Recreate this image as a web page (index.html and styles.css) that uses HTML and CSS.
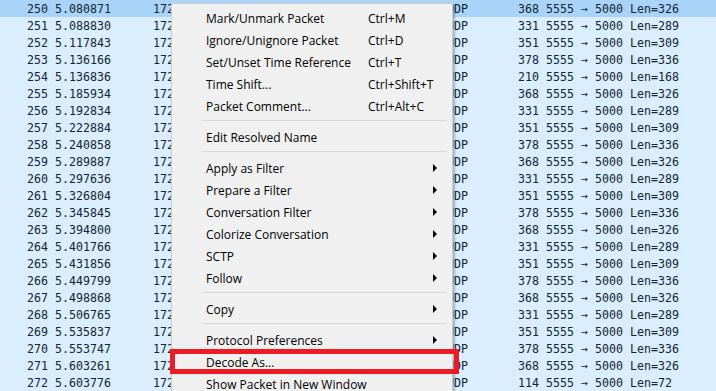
FILE: index.html
```html
<!DOCTYPE html>
<html>
<head>
<meta charset="utf-8">
<link rel="stylesheet" href="styles.css">
</head>
<body>
<div class="packets">
  <div class="row selected"><span class="no">250</span><span class="time">5.080871</span><span class="src">172.16.1.10</span><span class="proto">UDP</span><span class="len">368</span><span class="info">5555 → 5000 Len=326</span></div>
  <div class="row"><span class="no">251</span><span class="time">5.088830</span><span class="src">172.16.1.10</span><span class="proto">UDP</span><span class="len">331</span><span class="info">5555 → 5000 Len=289</span></div>
  <div class="row"><span class="no">252</span><span class="time">5.117843</span><span class="src">172.16.1.10</span><span class="proto">UDP</span><span class="len">351</span><span class="info">5555 → 5000 Len=309</span></div>
  <div class="row"><span class="no">253</span><span class="time">5.136166</span><span class="src">172.16.1.10</span><span class="proto">UDP</span><span class="len">378</span><span class="info">5555 → 5000 Len=336</span></div>
  <div class="row"><span class="no">254</span><span class="time">5.136836</span><span class="src">172.16.1.10</span><span class="proto">UDP</span><span class="len">210</span><span class="info">5555 → 5000 Len=168</span></div>
  <div class="row"><span class="no">255</span><span class="time">5.185934</span><span class="src">172.16.1.10</span><span class="proto">UDP</span><span class="len">368</span><span class="info">5555 → 5000 Len=326</span></div>
  <div class="row"><span class="no">256</span><span class="time">5.192834</span><span class="src">172.16.1.10</span><span class="proto">UDP</span><span class="len">331</span><span class="info">5555 → 5000 Len=289</span></div>
  <div class="row"><span class="no">257</span><span class="time">5.222884</span><span class="src">172.16.1.10</span><span class="proto">UDP</span><span class="len">351</span><span class="info">5555 → 5000 Len=309</span></div>
  <div class="row"><span class="no">258</span><span class="time">5.240858</span><span class="src">172.16.1.10</span><span class="proto">UDP</span><span class="len">378</span><span class="info">5555 → 5000 Len=336</span></div>
  <div class="row"><span class="no">259</span><span class="time">5.289887</span><span class="src">172.16.1.10</span><span class="proto">UDP</span><span class="len">368</span><span class="info">5555 → 5000 Len=326</span></div>
  <div class="row"><span class="no">260</span><span class="time">5.297636</span><span class="src">172.16.1.10</span><span class="proto">UDP</span><span class="len">331</span><span class="info">5555 → 5000 Len=289</span></div>
  <div class="row"><span class="no">261</span><span class="time">5.326804</span><span class="src">172.16.1.10</span><span class="proto">UDP</span><span class="len">351</span><span class="info">5555 → 5000 Len=309</span></div>
  <div class="row"><span class="no">262</span><span class="time">5.345845</span><span class="src">172.16.1.10</span><span class="proto">UDP</span><span class="len">378</span><span class="info">5555 → 5000 Len=336</span></div>
  <div class="row"><span class="no">263</span><span class="time">5.394800</span><span class="src">172.16.1.10</span><span class="proto">UDP</span><span class="len">368</span><span class="info">5555 → 5000 Len=326</span></div>
  <div class="row"><span class="no">264</span><span class="time">5.401766</span><span class="src">172.16.1.10</span><span class="proto">UDP</span><span class="len">331</span><span class="info">5555 → 5000 Len=289</span></div>
  <div class="row"><span class="no">265</span><span class="time">5.431856</span><span class="src">172.16.1.10</span><span class="proto">UDP</span><span class="len">351</span><span class="info">5555 → 5000 Len=309</span></div>
  <div class="row"><span class="no">266</span><span class="time">5.449799</span><span class="src">172.16.1.10</span><span class="proto">UDP</span><span class="len">378</span><span class="info">5555 → 5000 Len=336</span></div>
  <div class="row"><span class="no">267</span><span class="time">5.498868</span><span class="src">172.16.1.10</span><span class="proto">UDP</span><span class="len">368</span><span class="info">5555 → 5000 Len=326</span></div>
  <div class="row"><span class="no">268</span><span class="time">5.506765</span><span class="src">172.16.1.10</span><span class="proto">UDP</span><span class="len">331</span><span class="info">5555 → 5000 Len=289</span></div>
  <div class="row"><span class="no">269</span><span class="time">5.535837</span><span class="src">172.16.1.10</span><span class="proto">UDP</span><span class="len">351</span><span class="info">5555 → 5000 Len=309</span></div>
  <div class="row"><span class="no">270</span><span class="time">5.553747</span><span class="src">172.16.1.10</span><span class="proto">UDP</span><span class="len">378</span><span class="info">5555 → 5000 Len=336</span></div>
  <div class="row"><span class="no">271</span><span class="time">5.603261</span><span class="src">172.16.1.10</span><span class="proto">UDP</span><span class="len">368</span><span class="info">5555 → 5000 Len=326</span></div>
  <div class="row"><span class="no">272</span><span class="time">5.603776</span><span class="src">172.16.1.10</span><span class="proto">UDP</span><span class="len">114</span><span class="info">5555 → 5000 Len=72</span></div>
</div>

<div class="menu">
  <div class="item"><span class="label">Mark/Unmark Packet</span><span class="key">Ctrl+M</span></div>
  <div class="item"><span class="label">Ignore/Unignore Packet</span><span class="key">Ctrl+D</span></div>
  <div class="item"><span class="label">Set/Unset Time Reference</span><span class="key">Ctrl+T</span></div>
  <div class="item"><span class="label">Time Shift...</span><span class="key">Ctrl+Shift+T</span></div>
  <div class="item"><span class="label">Packet Comment...</span><span class="key">Ctrl+Alt+C</span></div>
  <div class="sep"></div>
  <div class="item"><span class="label">Edit Resolved Name</span></div>
  <div class="sep"></div>
  <div class="item sub"><span class="label">Apply as Filter</span></div>
  <div class="item sub"><span class="label">Prepare a Filter</span></div>
  <div class="item sub"><span class="label">Conversation Filter</span></div>
  <div class="item sub"><span class="label">Colorize Conversation</span></div>
  <div class="item sub"><span class="label">SCTP</span></div>
  <div class="item sub"><span class="label">Follow</span></div>
  <div class="sep"></div>
  <div class="item sub"><span class="label">Copy</span></div>
  <div class="sep"></div>
  <div class="item sub"><span class="label">Protocol Preferences</span></div>
  <div class="item marked"><span class="label">Decode As...</span></div>
  <div class="item"><span class="label">Show Packet in New Window</span></div>
</div>
</body>
</html>
```
FILE: styles.css
```css
html, body {
  margin: 0;
  padding: 0;
  width: 716px;
  height: 391px;
  overflow: hidden;
  background: #daeeff;
}

.packets {
  font-family: "DejaVu Sans Mono", monospace;
  font-size: 11.63px;
  color: #12272e;
}

.row {
  display: grid;
  grid-template-columns: 48px 105px 294px 50px 42px 1fr;
  height: 17px;
  line-height: 18px;
  background: #daeeff;
  white-space: pre;
  overflow: hidden;
}

.row.selected {
  background: #a9d3f8;
}

.no { text-align: right; }
.time { padding-left: 7px; }
.len { text-align: right; }
.info { padding-left: 7px; }

.menu {
  position: absolute;
  left: 171px;
  top: 3px;
  width: 280px;
  padding: 2px 0;
  background: #f0f0f0;
  border: 1px solid #cccccc;
  box-shadow: 2px 2px 2px rgba(0, 0, 0, 0.25);
  font-family: "Open Sans", sans-serif;
  font-size: 12px;
  color: #000;
}

.item {
  position: relative;
  display: grid;
  grid-template-columns: 162px 1fr;
  height: 22px;
  line-height: 25px;
  padding-left: 34px;
  white-space: nowrap;
}

.item.sub::after {
  content: "";
  position: absolute;
  right: 15px;
  top: 8px;
  border-top: 4px solid transparent;
  border-bottom: 4px solid transparent;
  border-left: 4px solid #000;
}

.item.marked::before {
  content: "";
  position: absolute;
  left: -2px;
  top: -1px;
  width: 279px;
  height: 15px;
  border: 5px solid #ed1c24;
}

.sep {
  height: 9px;
  display: flex;
  align-items: center;
  padding: 0 5px 0 30px;
}

.sep::before {
  content: "";
  flex: 1;
  height: 1px;
  background: #d7d7d7;
}
```
